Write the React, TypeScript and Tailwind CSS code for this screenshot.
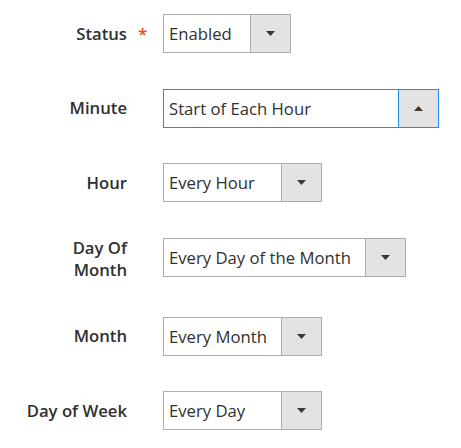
import React from "react";

type Row = {
  label: string[];
  value: string;
  width: string;
  required?: boolean;
  focused?: boolean;
};

const rows: Row[] = [
  { label: ["Status"], value: "Enabled", width: "w-[128px]", required: true },
  { label: ["Minute"], value: "Start of Each Hour", width: "w-[276px]", focused: true },
  { label: ["Hour"], value: "Every Hour", width: "w-[159px]" },
  { label: ["Day Of", "Month"], value: "Every Day of the Month", width: "w-[243px]" },
  { label: ["Month"], value: "Every Month", width: "w-[159px]" },
  { label: ["Day of Week"], value: "Every Day", width: "w-[159px]" },
];

function Select({ row }: { row: Row }) {
  const border = row.focused ? "border-[#1f8ee6]" : "border-[#adadad]";
  return (
    <div className={`${row.width} h-[39px] flex border ${border} bg-white shrink-0`}>
      <div className="flex-1 flex items-center pl-[5px] text-[16.7px] text-[#303030] whitespace-nowrap overflow-hidden">
        {row.value}
      </div>
      <div
        className={`w-[40px] h-full flex items-center justify-center bg-[#e3e3e3] border-l ${border}`}
      >
        {row.focused ? (
          <svg width="9" height="5" viewBox="0 0 9 5">
            <path d="M0 5 L4.5 0 L9 5 Z" fill="#41362f" />
          </svg>
        ) : (
          <svg width="9" height="5" viewBox="0 0 9 5">
            <path d="M0 0 L9 0 L4.5 5 Z" fill="#41362f" />
          </svg>
        )}
      </div>
    </div>
  );
}

export default function App() {
  return (
    <div
      className="w-[461px] h-[448px] bg-white pt-[14px] flex flex-col gap-[35.7px]"
      style={{ fontFamily: '"Open Sans", "Noto Sans", sans-serif' }}
    >
      {rows.map((row, i) => (
        <div key={i} className="flex items-start">
          <div
            className={`w-[127px] shrink-0 text-right font-semibold text-[16.7px] leading-[22px] text-[#303030] ${
              row.label.length > 1 ? "-mt-[1px]" : "mt-[8.5px]"
            }`}
          >
            {row.label.map((l, j) => (
              <div key={j}>{l}</div>
            ))}
          </div>
          <div className="w-[36px] shrink-0 relative">
            {row.required && (
              <span className="absolute left-[11px] top-[9px] text-[#eb5202] text-[17px] font-semibold leading-[22px]">
                *
              </span>
            )}
          </div>
          <Select row={row} />
        </div>
      ))}
    </div>
  );
}
